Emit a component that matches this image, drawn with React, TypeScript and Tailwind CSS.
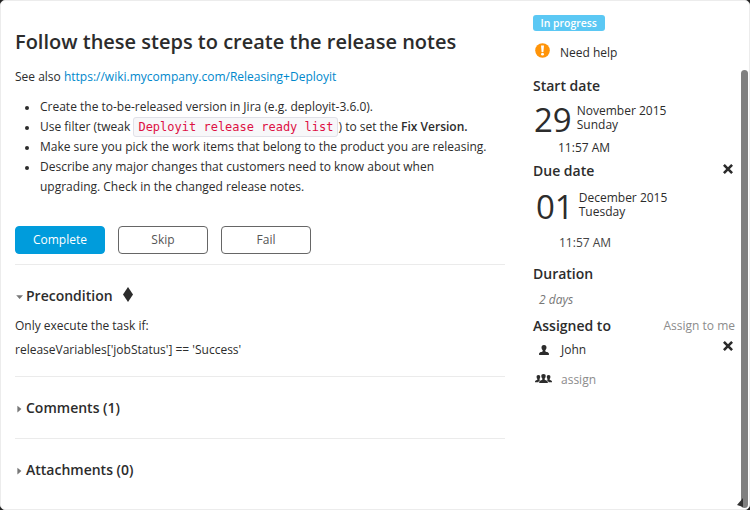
import type { ReactNode } from "react";

const Divider = () => <div className="h-px w-[490px] bg-[#ebebeb]" />;

const Caret = ({ open = false }: { open?: boolean }) => (
  <svg className="mt-[2px] mr-[2px] ml-px h-[8px] w-[8px] shrink-0" viewBox="0 0 8 8" fill="#777">
    {open ? <path d="M0.2 2.2h6.800L3.600 6z" /> : <path d="M1.400 0.800v6.600L5.400 4.100z" />}
  </svg>
);

const Cross = () => (
  <svg className="h-[10px] w-[10px]" viewBox="0 0 10 10" stroke="#2c2c2c" strokeWidth="2.6">
    <path d="M0.9 0.9L9.1 9.1M9.1 0.9L0.9 9.1" />
  </svg>
);

const Person = () => (
  <svg className="h-[10px] w-[10px]" viewBox="0 0 10 10" fill="#2c2c2c">
    <path d="M5 0C3.200 0 2.400 1.200 2.500 2.700c.1 1.200.6 2 1.200 2.600v.9C3.300 7 .3 6.900.1 8.600V10h9.800V8.600C9.700 6.900 6.700 7 6.300 6.200v-.9c.6-.6 1.100-1.400 1.200-2.600C7.600 1.200 6.800 0 5 0z" />
  </svg>
);

const People = () => (
  <svg className="h-[9px] w-[17px]" viewBox="0 0 17 9" fill="#2c2c2c">
    <path d="M8.500 0C7 0 6.200.9 6.300 2.300c0 1 .4 1.800 1.100 2.400v.7C7 6.200 4.400 6.200 4.200 7.800V9h8.600V7.800c-.2-1.600-2.800-1.600-3.200-2.400v-.7c.7-.6 1.100-1.400 1.100-2.400C10.800.9 10 0 8.500 0z" />
    <path d="M3.400 1c-1.300 0-1.900.9-1.800 2 0 .9.300 1.500.8 1.900v.6C2.200 6.100.2 6.200 0 7.500V8.300h3.400c.2-1.100 1-1.700 2-2.100L4.400 5.500V4.900c.5-.4.8-1 .8-1.900.1-1.100-.5-2-1.800-2zM13.600 1c1.300 0 1.900.9 1.800 2 0 .9-.3 1.500-.8 1.900v.6c.2.6 2.200.7 2.400 2v.8h-3.400c-.2-1.100-1-1.700-2-2.100l1-.7V4.900c-.5-.4-.8-1-.8-1.900-.1-1.100.5-2 1.800-2z" />
  </svg>
);

const Section = ({ title, open, children }: { title: string; open?: boolean; children?: ReactNode }) => (
  <div className="flex h-[22px] items-center text-[14px] font-semibold leading-[22px]">
    <Caret open={open} />
    <span>{title}</span>
    {children}
  </div>
);

const Item = ({ children }: { children: ReactNode }) => (
  <li className="flex h-5">
    <span className="mt-[9px] mr-[11px] h-1 w-1 shrink-0 rounded-full bg-[#2c2c2c]" />
    <span className="whitespace-nowrap">{children}</span>
  </li>
);

export default function App() {
  return (
    <div className="h-[510px] w-[750px] overflow-hidden bg-[#222] font-['Open_Sans','Noto_Sans',sans-serif] text-[12px] leading-5 text-[#2c2c2c]">
      <div className="relative flex h-[510px] w-[750px] overflow-hidden rounded-[5px] border border-[#ececec] bg-white whitespace-nowrap">
        <main className="w-[518px] pl-[14px]">
          <h1 className="mt-[26px] h-[30px] text-[20px] font-semibold leading-[30px]">
            Follow these steps to create the release notes
          </h1>
          <p className="mt-[10px] h-5">
            See also <a className="text-[#0088cc]">https://wiki.mycompany.com/Releasing+Deployit</a>
          </p>
          <ul className="mt-[10px] ml-[10px]">
            <Item>Create the to-be-released version in Jira (e.g. deployit-3.6.0).</Item>
            <Item>
              Use filter (tweak{" "}
              <code className="rounded-[3px] border border-[#e1e1e8] bg-[#f7f7f9] px-1 py-[2px] font-['DejaVu_Sans_Mono',monospace] text-[12px] text-[#dd1144]">
                Deployit release ready list
              </code>
              ) to set the <b className="font-semibold">Fix Version.</b>
            </Item>
            <Item>Make sure you pick the work items that belong to the product you are releasing.</Item>
            <Item>
              Describe any major changes that customers need to know about when
              <br />
              upgrading. Check in the changed release notes.
            </Item>
          </ul>
          <div className="mt-[49px] flex gap-[13px] text-center leading-[26px]">
            <button className="h-[28px] w-[90px] rounded-[4px] border border-[#009cdc] bg-[#009cdc] font-medium text-white">
              Complete
            </button>
            <button className="h-[28px] w-[90px] rounded-[4px] border border-[#666] text-[#555]">Skip</button>
            <button className="h-[28px] w-[90px] rounded-[4px] border border-[#666] text-[#555]">Fail</button>
          </div>
          <div className="mt-[10px]">
            <Divider />
          </div>
          <div className="mt-5">
            <Section title="Precondition" open>
              <svg className="mb-[3px] ml-[10px] h-[15px] w-[10px]" viewBox="0 0 10 15" fill="#2c2c2c">
                <path d="M5 0l5 7.500L5 15 0 7.500z" />
              </svg>
            </Section>
          </div>
          <p className="mt-[9px] h-5">Only execute the task if:</p>
          <p className="mt-[4px] mb-[16px] h-5">releaseVariables['jobStatus'] == 'Success'</p>
          <Divider />
          <div className="mt-5 mb-[19px]">
            <Section title="Comments (1)" />
          </div>
          <Divider />
          <div className="mt-5">
            <Section title="Attachments (0)" />
          </div>
        </main>

        <aside className="w-[216px] pl-[14px]">
          <div className="mt-[14px] h-4 w-[72px] rounded-[3px] bg-[#5bc8f4] text-center text-[11px] font-semibold leading-4 text-white">
            <span className="inline-block origin-center scale-x-[0.95]">In progress</span>
          </div>
          <div className="mt-[12px] flex h-5 items-center">
            <svg className="mr-[10px] mb-[5px] ml-[2px] h-[15px] w-[15px]" viewBox="0 0 15 15">
              <circle cx="7.500" cy="7.500" r="7.300" fill="#ff9409" />
              <path d="M6 2.600h3L8.400 9H6.600z" fill="#fff" />
              <circle cx="7.500" cy="11.200" r="1.400" fill="#fff" />
            </svg>
            Need help
          </div>
          <h2 className="mt-[13px] h-5 text-[14px] font-semibold">Start date</h2>
          <div className="mt-[8px] flex h-[32px]">
            <span className="mr-[5px] ml-px text-[33px] leading-[32px]">29</span>
            <div className="leading-[14px]">
              <div>November 2015</div>
              <div>Sunday</div>
            </div>
          </div>
          <div className="mt-[2px] ml-[25px] h-5">11:57 AM</div>
          <div className="mt-[3px] flex h-5 justify-between">
            <h2 className="text-[14px] font-semibold">Due date</h2>
            <div className="mt-[3px] mr-[2px]">
              <Cross />
            </div>
          </div>
          <div className="mt-[10px] flex h-[32px]">
            <span className="mr-[5px] ml-[3px] text-[33px] leading-[32px]">01</span>
            <div className="leading-[14px]">
              <div>December 2015</div>
              <div>Tuesday</div>
            </div>
          </div>
          <div className="mt-[10px] ml-[26px] h-5 text-[#444]">11:57 AM</div>
          <h2 className="mt-[11px] h-5 text-[14px] font-semibold">Duration</h2>
          <div className="mt-[6px] ml-[6px] h-5 italic text-[#777]">2 days</div>
          <div className="mt-[6px] flex h-5 justify-between">
            <h2 className="text-[14px] font-semibold">Assigned to</h2>
            <span className="text-[#8c8c8c]">Assign to me</span>
          </div>
          <div className="mt-[4px] flex h-5 items-center">
            <span className="mr-[12px] mb-px ml-[6px]">
              <Person />
            </span>
            <span>John</span>
            <span className="mr-[2px] mb-[8px] ml-auto">
              <Cross />
            </span>
          </div>
          <div className="mt-[10px] flex h-5 items-center">
            <span className="mr-[9px] mb-[4px] ml-[2px]">
              <People />
            </span>
            <span className="text-[#8c8c8c]">assign</span>
          </div>
        </aside>
        <div className="mt-[69px] ml-[6px] h-[438px] w-[7px] shrink-0 rounded-full bg-[#808080]" />
        <svg className="absolute right-0 bottom-0 h-[12px] w-[12px]" viewBox="0 0 12 12">
          <path d="M0 8l6-7v9z" fill="#333" />
        </svg>
      </div>
    </div>
  );
}
